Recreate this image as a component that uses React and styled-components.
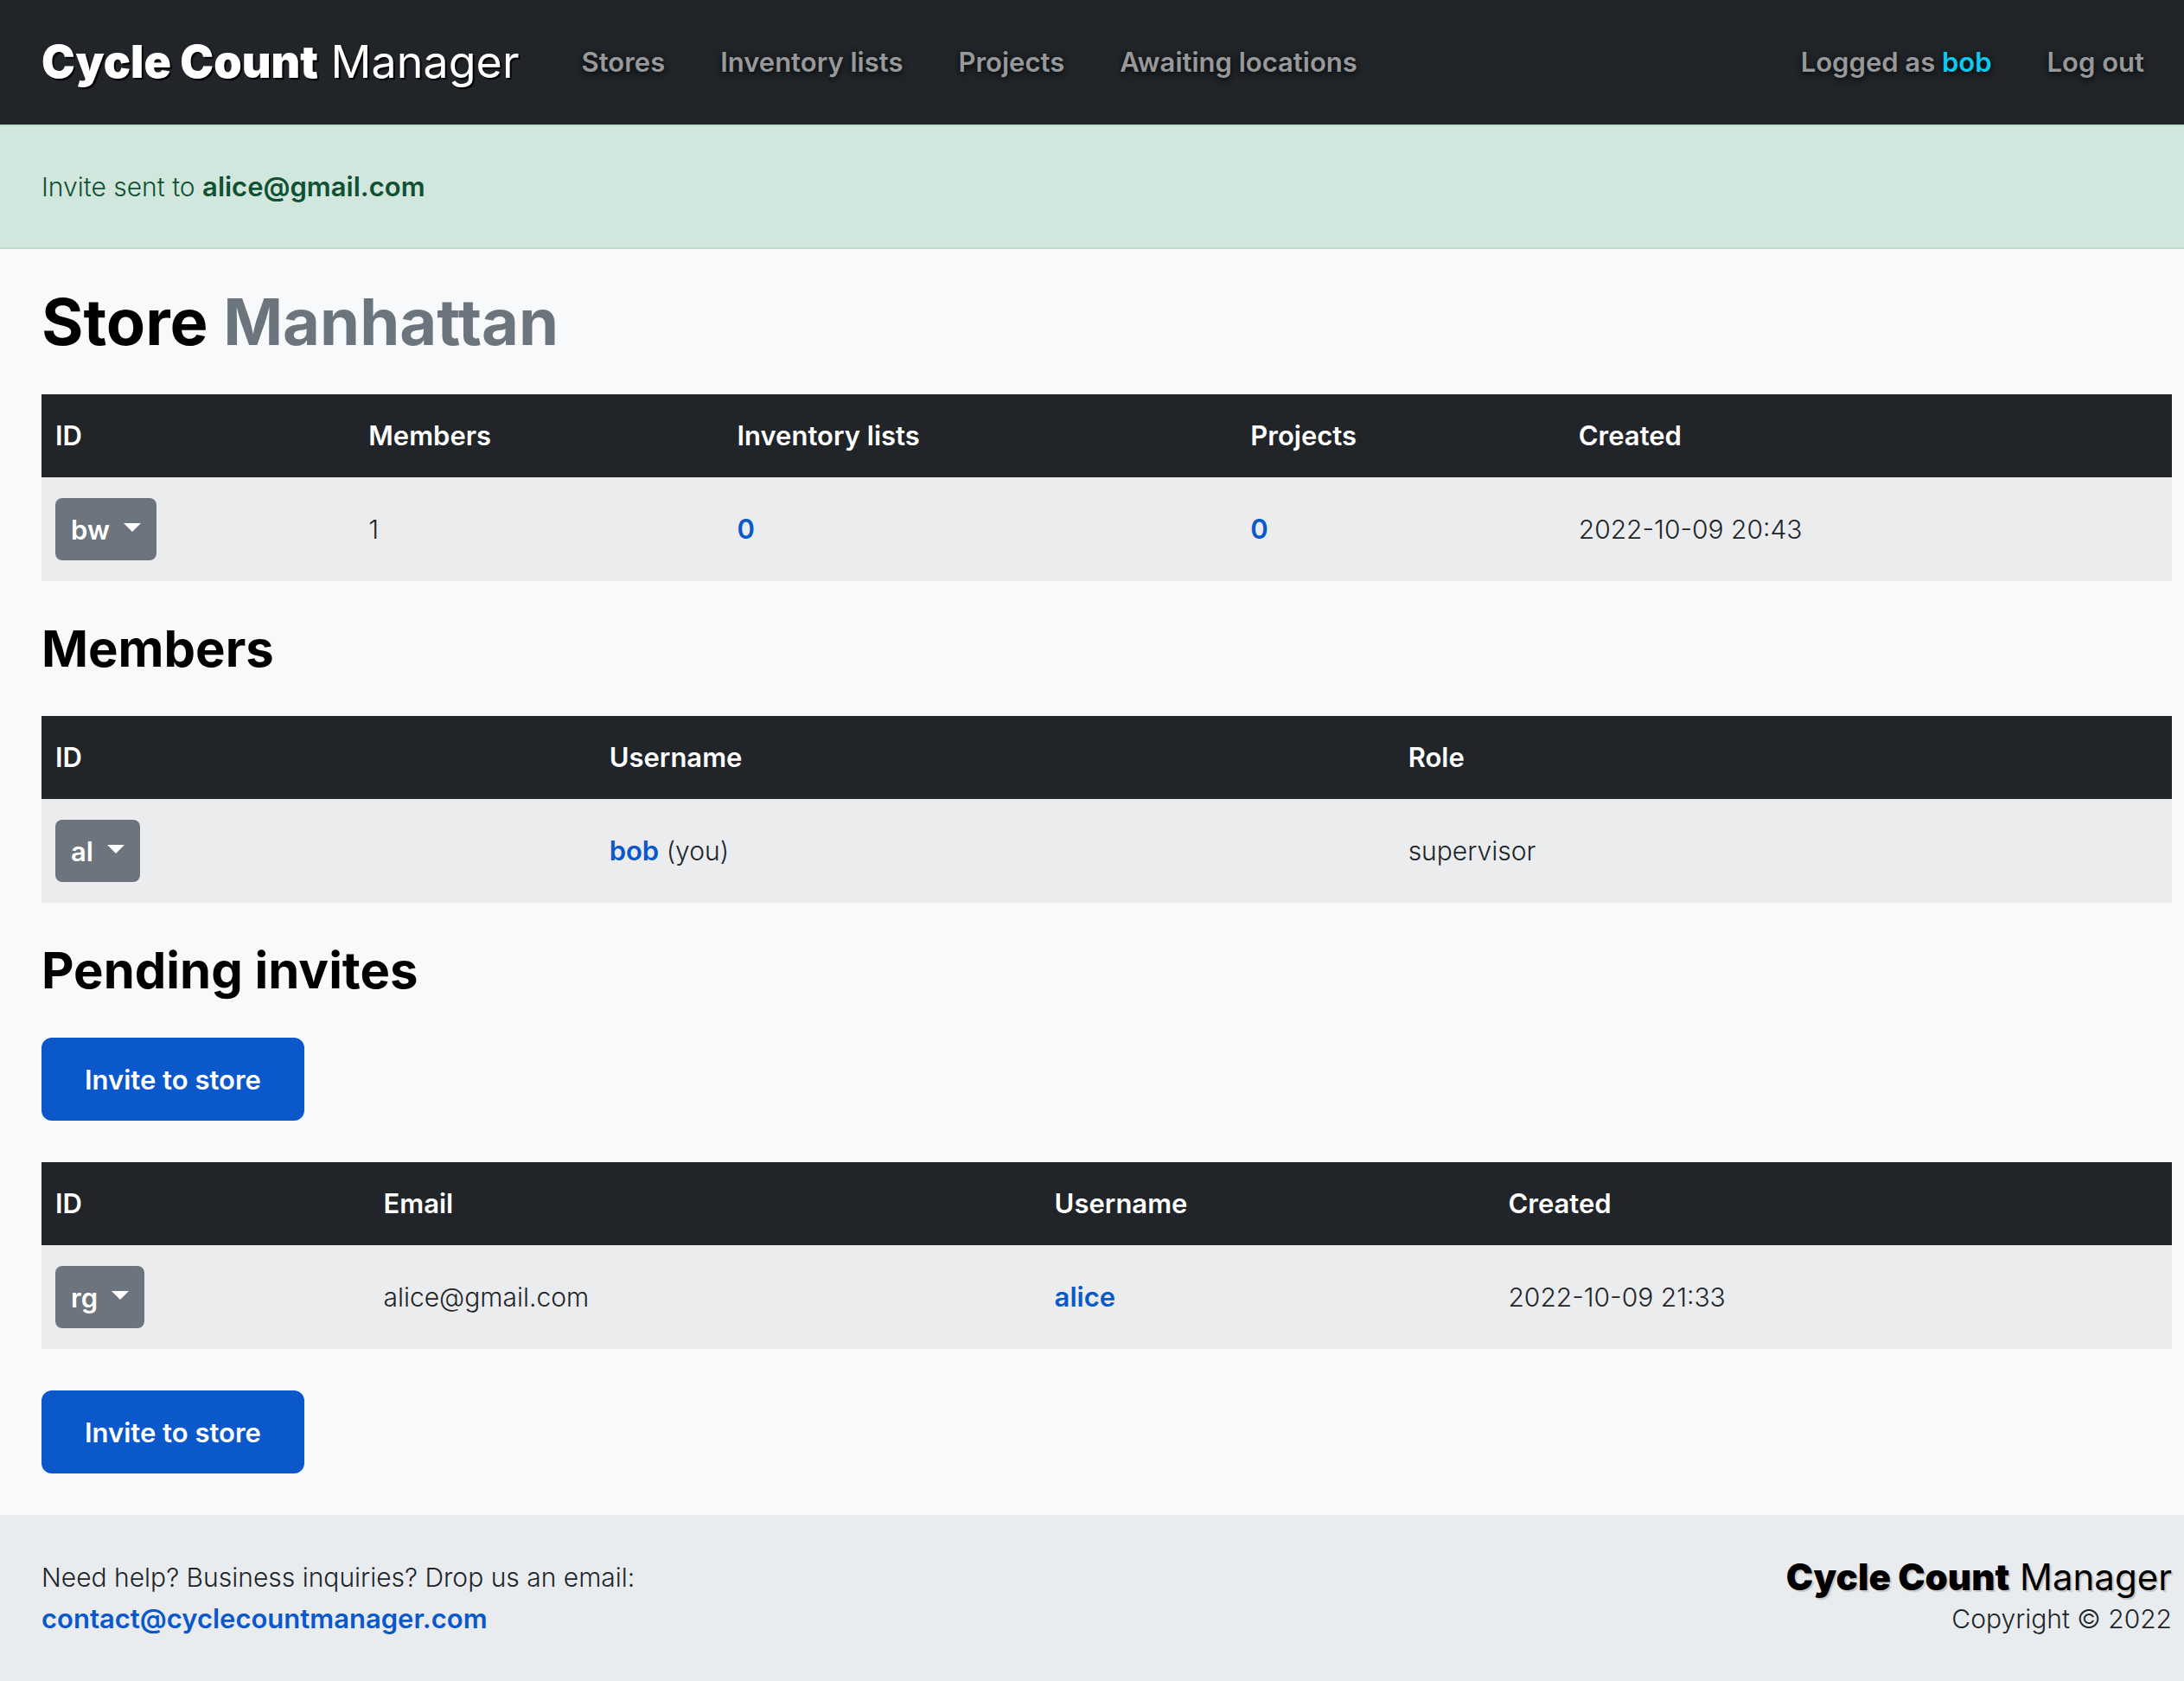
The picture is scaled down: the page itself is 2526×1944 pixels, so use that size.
import React from "react";
import styled, { createGlobalStyle, css } from "styled-components";

const GlobalStyle = createGlobalStyle`
  *, *::before, *::after { box-sizing: border-box; }
  body {
    margin: 0;
    background: #f8f9fa;
    color: #212529;
    font-family: Inter, "Liberation Sans", sans-serif;
    font-size: 30px;
    font-weight: 300;
    line-height: 48px;
  }
`;

const boldText = css`
  font-size: 31px;
  font-weight: 600;
`;

const Header = styled.header`
  display: flex;
  align-items: center;
  gap: 72px;
  padding: 48px 46px 48px 48px;
  background: #212529;
`;

const Brand = styled.a`
  color: ${(p) => (p.$inverse ? "#fff" : "#000")};
  font-size: ${(p) => (p.$inverse ? 52 : 42)}px;
  font-weight: 400;
  line-height: 48px;
  text-decoration: none;
  white-space: nowrap;
  text-shadow: 2px 2px 1px ${(p) => (p.$inverse ? "#000" : "#c9c5c3")};

  b { font-weight: 900; }
`;

const Nav = styled.nav`
  display: flex;
  flex: 1;
  gap: 64px;
`;

const NavLink = styled.a`
  color: #979899;
  ${boldText}
  text-decoration: none;
  white-space: nowrap;
  text-shadow: 0 2px 8px #000;

  &:nth-last-child(2) { margin-left: auto; }
`;

const UserName = styled.span`
  color: #0dcaf0;
`;

const Alert = styled.div`
  padding: 46px 48px;
  border: solid #badbcc;
  border-width: 2px 0;
  background: #d1e7dd;
  color: #0f5132;
`;

const Strong = styled.strong`
  ${boldText}
`;

const Main = styled.main`
  display: flex;
  flex-direction: column;
  align-items: flex-start;
  gap: 48px;
  padding: 48px 14px 48px 48px;
`;

const Title = styled.h1`
  margin: 0;
  color: #000;
  font-size: 74px;
  font-weight: 700;
  line-height: 72px;

  span { color: #6c757d; }
`;

const Subtitle = styled.h2`
  margin: 0;
  color: #000;
  font-size: 58px;
  font-weight: 700;
  line-height: 60px;
`;

const Table = styled.table`
  width: 100%;
  table-layout: fixed;
  border-collapse: collapse;
  text-align: left;

  th {
    padding: 24px 16px;
    background: #212529;
    color: #fff;
    ${boldText}
  }
  td {
    padding: 24px 16px;
    background: #ebeced;
  }
`;

const Link = styled.a`
  color: #0a58ca;
  ${boldText}
  text-decoration: none;
`;

const IdButton = styled.button`
  display: flex;
  align-items: center;
  gap: 16px;
  height: 72px;
  padding: 0 18px;
  border: 0;
  border-radius: 8px;
  background: #6c757d;
  color: #fff;
  font-family: inherit;
  ${boldText}

  &::after {
    content: "";
    margin-bottom: 4px;
    border: solid transparent;
    border-width: 10px 10px 0;
    border-top-color: #fff;
  }
`;

const PrimaryButton = styled.button`
  height: 96px;
  padding: 0 50px;
  border: 0;
  border-radius: 12px;
  background: #0a58ca;
  color: #fff;
  font-family: inherit;
  ${boldText}
`;

const Footer = styled.footer`
  display: flex;
  justify-content: space-between;
  padding: 48px 14px 48px 48px;
  background: #e9ecef;
`;

const FooterBlock = styled.div`
  display: flex;
  flex-direction: column;
  align-items: ${(p) => (p.$end ? "flex-end" : "flex-start")};
`;

function DataTable({ columns, cells }) {
  return (
    <Table>
      <colgroup>
        {columns.map(([name, share]) => (
          <col key={name} style={{ width: `${share}%` }} />
        ))}
      </colgroup>
      <thead>
        <tr>
          {columns.map(([name]) => (
            <th key={name} scope="col">{name}</th>
          ))}
        </tr>
      </thead>
      <tbody>
        <tr>
          {cells.map((cell, i) => (
            <td key={columns[i][0]}>{cell}</td>
          ))}
        </tr>
      </tbody>
    </Table>
  );
}

const storeColumns = [["ID", 14.7], ["Members", 17.3], ["Inventory lists", 24.1], ["Projects", 15.4], ["Created", 28.5]];
const memberColumns = [["ID", 26], ["Username", 37.5], ["Role", 36.5]];
const inviteColumns = [["ID", 15.4], ["Email", 31.5], ["Username", 21.3], ["Created", 31.8]];

export default function App() {
  return (
    <>
      <GlobalStyle />
      <Header>
        <Brand href="#" $inverse><b>Cycle Count</b> Manager</Brand>
        <Nav>
          <NavLink href="#stores">Stores</NavLink>
          <NavLink href="#lists">Inventory lists</NavLink>
          <NavLink href="#projects">Projects</NavLink>
          <NavLink href="#locations">Awaiting locations</NavLink>
          <NavLink href="#account">Logged as <UserName>bob</UserName></NavLink>
          <NavLink href="#logout">Log out</NavLink>
        </Nav>
      </Header>
      <Alert role="alert">Invite sent to <Strong>alice@gmail.com</Strong></Alert>
      <Main>
        <Title>Store <span>Manhattan</span></Title>
        <DataTable
          columns={storeColumns}
          cells={[
            <IdButton type="button">bw</IdButton>,
            "1",
            <Link href="#lists">0</Link>,
            <Link href="#projects">0</Link>,
            "2022-10-09 20:43",
          ]}
        />
        <Subtitle>Members</Subtitle>
        <DataTable
          columns={memberColumns}
          cells={[
            <IdButton type="button">al</IdButton>,
            <><Link href="#bob">bob</Link> (you)</>,
            "supervisor",
          ]}
        />
        <Subtitle>Pending invites</Subtitle>
        <PrimaryButton type="button">Invite to store</PrimaryButton>
        <DataTable
          columns={inviteColumns}
          cells={[
            <IdButton type="button">rg</IdButton>,
            "alice@gmail.com",
            <Link href="#alice">alice</Link>,
            "2022-10-09 21:33",
          ]}
        />
        <PrimaryButton type="button">Invite to store</PrimaryButton>
      </Main>
      <Footer>
        <FooterBlock>
          <span>Need help? Business inquiries? Drop us an email:</span>
          <Link href="mailto:contact@cyclecountmanager.com">contact@cyclecountmanager.com</Link>
        </FooterBlock>
        <FooterBlock $end>
          <Brand href="#"><b>Cycle Count</b> Manager</Brand>
          <span>Copyright © 2022</span>
        </FooterBlock>
      </Footer>
    </>
  );
}
